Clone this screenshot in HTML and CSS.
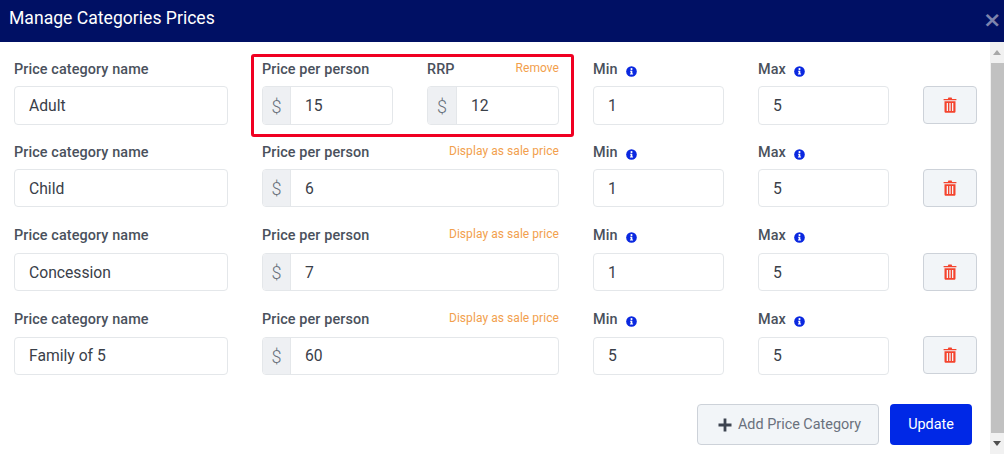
FILE: index.html
```html
<!DOCTYPE html>
<html lang="en">
<head>
<meta charset="utf-8">
<title>Manage Categories Prices</title>
<link rel="stylesheet" href="styles.css">
</head>
<body>
<svg class="defs" width="0" height="0" aria-hidden="true">
  <symbol id="info" viewBox="0 0 12 12">
    <circle cx="6" cy="6" r="5.8" fill="#0a28e0"/>
    <circle cx="6" cy="3.4" r="1.15" fill="#fff"/>
    <path d="M4.5 5.1H6.9V8.1H7.7V9.2H4.3V8.1H5.1V6.2H4.5Z" fill="#fff"/>
  </symbol>
  <symbol id="trash" viewBox="0 0 14 16">
    <path d="M4.8 1.9 5.4.6H8.6L9.2 1.9H13.4V3.2H.6V1.9Z" fill="#f4442e"/>
    <path fill-rule="evenodd" d="M1.5 4.2H12.5V14.4C12.5 15.2 11.9 15.8 11.1 15.8H2.9C2.1 15.8 1.5 15.2 1.5 14.4ZM3.7 6V14H5V6ZM6.35 6V14H7.65V6ZM9 6V14H10.3V6Z" fill="#f4442e"/>
  </symbol>
</svg>
<div class="modal">
  <header class="modal-head">
    <h1 class="modal-title">Manage Categories Prices</h1>
    <span class="close">×</span>
  </header>
  <div class="modal-main">
    <div class="modal-body">
      <div class="rows">
        <div class="row">
          <div class="field"><div class="label-line"><label>Price category name</label></div><div class="box"><span class="val">Adult</span></div></div>
          <div class="price split">
            <div class="field"><div class="label-line"><label>Price per person</label></div><div class="box"><span class="addon">$</span><span class="val">15</span></div></div>
            <div class="field rrp"><div class="label-line"><label>RRP</label><a class="link">Remove</a></div><div class="box"><span class="addon">$</span><span class="val">12</span></div></div>
          </div>
          <div class="field"><div class="label-line"><label>Min</label><svg class="info"><use href="#info"/></svg></div><div class="box"><span class="val">1</span></div></div>
          <div class="field"><div class="label-line"><label>Max</label><svg class="info"><use href="#info"/></svg></div><div class="box"><span class="val">5</span></div></div>
          <button class="trash-btn"><svg class="trash"><use href="#trash"/></svg></button>
        </div>
        <div class="row">
          <div class="field"><div class="label-line"><label>Price category name</label></div><div class="box"><span class="val">Child</span></div></div>
          <div class="field"><div class="label-line"><label>Price per person</label><a class="link">Display as sale price</a></div><div class="box"><span class="addon">$</span><span class="val">6</span></div></div>
          <div class="field"><div class="label-line"><label>Min</label><svg class="info"><use href="#info"/></svg></div><div class="box"><span class="val">1</span></div></div>
          <div class="field"><div class="label-line"><label>Max</label><svg class="info"><use href="#info"/></svg></div><div class="box"><span class="val">5</span></div></div>
          <button class="trash-btn"><svg class="trash"><use href="#trash"/></svg></button>
        </div>
        <div class="row">
          <div class="field"><div class="label-line"><label>Price category name</label></div><div class="box"><span class="val">Concession</span></div></div>
          <div class="field"><div class="label-line"><label>Price per person</label><a class="link">Display as sale price</a></div><div class="box"><span class="addon">$</span><span class="val">7</span></div></div>
          <div class="field"><div class="label-line"><label>Min</label><svg class="info"><use href="#info"/></svg></div><div class="box"><span class="val">1</span></div></div>
          <div class="field"><div class="label-line"><label>Max</label><svg class="info"><use href="#info"/></svg></div><div class="box"><span class="val">5</span></div></div>
          <button class="trash-btn"><svg class="trash"><use href="#trash"/></svg></button>
        </div>
        <div class="row">
          <div class="field"><div class="label-line"><label>Price category name</label></div><div class="box"><span class="val">Family of 5</span></div></div>
          <div class="field"><div class="label-line"><label>Price per person</label><a class="link">Display as sale price</a></div><div class="box"><span class="addon">$</span><span class="val">60</span></div></div>
          <div class="field"><div class="label-line"><label>Min</label><svg class="info"><use href="#info"/></svg></div><div class="box"><span class="val">5</span></div></div>
          <div class="field"><div class="label-line"><label>Max</label><svg class="info"><use href="#info"/></svg></div><div class="box"><span class="val">5</span></div></div>
          <button class="trash-btn"><svg class="trash"><use href="#trash"/></svg></button>
        </div>
      </div>
      <div class="actions">
        <button class="btn btn-add"><svg class="plus" viewBox="0 0 14 14"><path d="M5.6 0.5H8.4V5.6H13.5V8.4H8.4V13.5H5.6V8.4H.5V5.6H5.6Z" fill="#3d4450"/></svg>Add Price Category</button>
        <button class="btn btn-update">Update</button>
      </div>
      <div class="highlight"></div>
    </div>
    <div class="scrollbar">
      <div class="arrow-cell"><span class="arrow-up"></span></div>
      <div class="thumb"></div>
      <div class="arrow-cell"><span class="arrow-down"></span></div>
    </div>
  </div>
</div>
</body>
</html>
```
FILE: styles.css
```css
* { box-sizing: border-box; }
html, body { margin: 0; height: 100%; overflow: hidden; }
body { font-family: Roboto, "Liberation Sans", sans-serif; color: #3f4650; background: #fff; }
.defs { position: absolute; }
.modal { width: 1004px; height: 454px; display: flex; flex-direction: column; }
.modal-head { height: 42px; flex: none; background: #001064; display: flex; align-items: center; justify-content: space-between; padding: 0 0 0 9px; }
.modal-title { margin: 0 0 6px; font-size: 17.6px; font-weight: 400; line-height: 24px; color: #fff; }
.close { font-family: "DejaVu Sans", sans-serif; font-weight: 700; font-size: 22px; line-height: 24px; width: 19px; margin: -3px 0 0; color: #7d84ad; position: relative; left: -2px; }
.modal-main { flex: 1; display: flex; min-height: 0; }
.modal-body { position: relative; width: 990px; flex: none; padding: 17.9px 13px 0 14px; }
.rows { display: flex; flex-direction: column; gap: 19px; }
.row { display: grid; grid-template-columns: 214px 297px 131px 131px 54px; column-gap: 34px; align-items: end; }
.row:first-child { margin-bottom: -1px; }
.price.split { display: grid; grid-template-columns: 131px 132px; column-gap: 34px; }
.field { display: flex; flex-direction: column; min-width: 0; }
.label-line { height: 26px; display: flex; align-items: flex-start; justify-content: space-between; padding-top: 1.5px; }
.row:nth-child(n+3) .label-line { height: 27px; }
.label-line label { font-size: 14.4px; line-height: 18px; font-weight: 500; letter-spacing: 0.1px; color: #4a515c; }
.field > .label-line:has(.info) { justify-content: flex-start; gap: 8px; }
.link { font-size: 12px; line-height: 15px; color: #f2a04d; letter-spacing: 0.06px; }
.info { width: 11px; height: 11px; margin-top: 5px; }
.box { height: 38px; border: 1px solid #e4e7ea; border-radius: 4px; display: flex; align-items: center; background: #fff; overflow: hidden; }
.row:first-child .box { height: 39px; }
.val { padding: 2px 0 0 14px; font-size: 15.7px; line-height: 20px; font-weight: 400; color: #3a4049; }
.row:last-child .val { padding-top: 0; }
.addon { width: 28px; height: 100%; flex: none; background: #eef0f3; border-right: 1px solid #e4e7ea; display: flex; align-items: center; justify-content: center; padding-top: 2px; font-size: 18px; font-weight: 300; color: #68707c; }
.rrp .addon { width: 29px; }
.trash-btn { height: 38px; padding: 0; border: 1px solid #cdd2d9; border-radius: 4px; background: #f2f5f8; display: flex; align-items: center; justify-content: center; }
.row:first-child .trash-btn, .row:last-child .trash-btn { margin-bottom: 1px; }
.trash { width: 14px; height: 16px; }
.actions { position: absolute; left: 697px; top: 362px; display: flex; gap: 11px; }
.btn { height: 41px; border-radius: 4px; font-family: inherit; font-size: 14.4px; display: flex; align-items: center; justify-content: center; padding: 0; }
.btn-add { width: 182px; border: 1px solid #cdd2d9; background: #f2f5f8; color: #6a717d; padding-left: 3px; }
.plus { width: 14px; height: 14px; margin-right: 6px; }
.btn-update { width: 82px; border: 0; background: #0028e6; color: #fff; }
.highlight { position: absolute; left: 251px; top: 12px; width: 323px; height: 83px; border: 3px solid #f00022; border-radius: 3px; pointer-events: none; }
.scrollbar { width: 14px; flex: none; background: #f1f1f1; display: flex; flex-direction: column; }
.arrow-cell { height: 21px; flex: none; display: flex; align-items: center; justify-content: center; }
.thumb { flex: 1; background: #c1c1c1; margin-left: 1px; }
.arrow-up { width: 0; height: 0; border-left: 4.5px solid transparent; border-right: 4.5px solid transparent; border-bottom: 5px solid #a8a8a8; }
.arrow-down { width: 0; height: 0; border-left: 4.5px solid transparent; border-right: 4.5px solid transparent; border-top: 5px solid #505050; }
```
